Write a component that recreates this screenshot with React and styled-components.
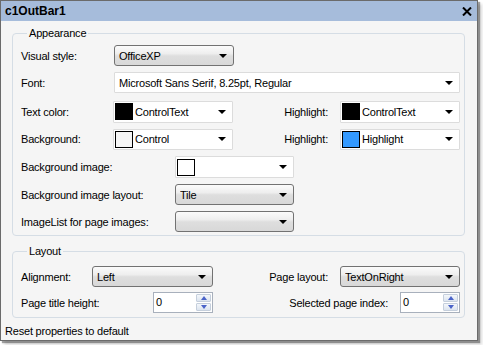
import React from "react";
import styled, { createGlobalStyle } from "styled-components";

const Global = createGlobalStyle`
  html, body { margin: 0; padding: 0; background: #ffffff; }
  body { font-family: "Liberation Sans", Arial, sans-serif; font-size: 11px; color: #000; letter-spacing: -0.2px; }
  #root { width: 483px; height: 345px; }
`;

const Win = styled.div`
  width: 476px;
  height: 339px;
  border: 1px solid #6b6b6b;
  background: #f5f5f5;
  box-shadow: 2px 2px 1px rgba(0,0,0,0.35), 4px 4px 3px rgba(0,0,0,0.15);
  display: flex;
  flex-direction: column;
  box-sizing: content-box;
`;

const TitleBar = styled.div`
  height: 20px;
  background: #a6bcdb;
  display: flex;
  align-items: center;
  justify-content: space-between;
  padding: 0 5px 0 4px;
  flex: none;
`;

const Title = styled.span`
  font-weight: bold;
  font-size: 12px;
  font-family: "Liberation Sans", Arial, sans-serif;
  letter-spacing: 0;
`;

const CloseIcon = () => (
  <svg width="10" height="9" viewBox="0 0 10 9">
    <path d="M1 0.5 L9 8.5 M9 0.5 L1 8.5" stroke="#000" strokeWidth="2" />
  </svg>
);

const Body = styled.div`
  flex: 1;
  display: flex;
  flex-direction: column;
  padding: 6px 12px 0 11px;
`;

const Group = styled.fieldset`
  margin: ${p => p.$mt || 0}px 0 0 0;
  padding: ${p => p.$pad};
  border: 1px solid #d5dde5;
  border-radius: 4px;
  display: flex;
  flex-direction: column;
  gap: ${p => p.$gap}px;
  min-width: 0;
`;

const Legend = styled.legend`
  padding: 0 2px;
  margin-left: 6px;
  font-size: 11px;
  line-height: 13px;
`;

const Row = styled.div`
  display: flex;
  align-items: center;
  height: ${p => p.$h || 21}px;
  margin-bottom: ${p => p.$mb || 0}px;
`;

const Label = styled.span`
  width: ${p => p.$w}px;
  flex: none;
  text-align: ${p => (p.$right ? "right" : "left")};
  padding-right: ${p => (p.$right ? 12 : 0)}px;
  box-sizing: border-box;
  white-space: nowrap;
`;

const Combo = styled.div`
  width: ${p => p.$w}px;
  height: ${p => p.$h || 21}px;
  box-sizing: border-box;
  flex: none;
  display: flex;
  align-items: center;
  padding: 0 6px 0 ${p => (p.$swatch ? 1 : 4)}px;
  border: 1px solid ${p => (p.$flat ? "#dcdcdc" : "#727272")};
  border-radius: ${p => (p.$flat ? 1 : 3)}px;
  background: ${p =>
    p.$flat
      ? "#ffffff"
      : "linear-gradient(to bottom, #fbfbfb 0%, #eeeeee 40%, #dedede 52%, #d8d8d8 100%)"};
`;

const ComboText = styled.span`
  flex: 1;
  white-space: nowrap;
  overflow: hidden;
`;

const Swatch = styled.span`
  width: 18px;
  height: 17px;
  box-sizing: border-box;
  border: 1px solid #000;
  background: ${p => p.$c};
  margin-right: 2px;
  flex: none;
`;

const Arrow = styled.span`
  width: 0;
  height: 0;
  border-left: 4px solid transparent;
  border-right: 4px solid transparent;
  border-top: 4px solid #000;
  flex: none;
`;

const Spin = styled.div`
  width: ${p => p.$w}px;
  height: 21px;
  box-sizing: border-box;
  border: 1px solid #a8b0bc;
  background: #fff;
  display: flex;
  flex: none;
`;

const SpinText = styled.span`
  flex: 1;
  padding-left: 2px;
  line-height: 19px;
`;

const SpinBtns = styled.div`
  width: 15px;
  display: flex;
  flex-direction: column;
  gap: 1px;
  padding: 1px 1px 1px 0;
`;

const SpinBtn = styled.div`
  flex: 1;
  display: flex;
  align-items: center;
  justify-content: center;
  background: linear-gradient(to bottom, #f4f7fb, #dce4ef);
  border: 1px solid #c5cfdc;
  border-radius: 1px;
`;

const Tri = styled.span`
  width: 0;
  height: 0;
  border-left: 3.5px solid transparent;
  border-right: 3.5px solid transparent;
  ${p => (p.$up ? "border-bottom: 4px solid #4a63c8;" : "border-top: 4px solid #4a63c8;")}
`;

const Footer = styled.div`
  padding: 7px 0 0 0;
  margin-left: -7px;
  font-size: 11px;
  line-height: 13px;
`;

function Dropdown({ w, h, flat, text, color }) {
  return (
    <Combo $w={w} $h={h} $flat={flat} $swatch={!!color}>
      {color && <Swatch $c={color} />}
      <ComboText>{text}</ComboText>
      <Arrow />
    </Combo>
  );
}

function Spinner({ w, value }) {
  return (
    <Spin $w={w}>
      <SpinText>{value}</SpinText>
      <SpinBtns>
        <SpinBtn><Tri $up /></SpinBtn>
        <SpinBtn><Tri /></SpinBtn>
      </SpinBtns>
    </Spin>
  );
}

export default function App() {
  return (
    <>
      <Global />
      <Win>
        <TitleBar>
          <Title>c1OutBar1</Title>
          <CloseIcon />
        </TitleBar>
        <Body>
          <Group $pad="5px 5px 3px 8px" $gap={6}>
            <Legend>Appearance</Legend>
            <Row>
              <Label $w={93}>Visual style:</Label>
              <Dropdown w={120} text="OfficeXP" />
            </Row>
            <Row $mb={2}>
              <Label $w={93}>Font:</Label>
              <Dropdown w={346} flat text="Microsoft Sans Serif, 8.25pt, Regular" />
            </Row>
            <Row>
              <Label $w={92}>Text color:</Label>
              <Dropdown w={120} h={22} flat text="ControlText" color="#000000" />
              <Label $w={107} $right>Highlight:</Label>
              <Dropdown w={120} h={22} flat text="ControlText" color="#000000" />
            </Row>
            <Row $h={22}>
              <Label $w={92}>Background:</Label>
              <Dropdown w={120} flat text="Control" color="#f5f5f5" />
              <Label $w={107} $right>Highlight:</Label>
              <Dropdown w={120} flat text="Highlight" color="#3399ff" />
            </Row>
            <Row $h={22}>
              <Label $w={154}>Background image:</Label>
              <Dropdown w={119} h={22} flat text="" color="#ffffff" />
            </Row>
            <Row>
              <Label $w={154}>Background image layout:</Label>
              <Dropdown w={119} text="Tile" />
            </Row>
            <Row>
              <Label $w={154}>ImageList for page images:</Label>
              <Dropdown w={119} text="" />
            </Row>
          </Group>
          <Group $pad="8px 5px 4px 8px" $gap={5} $mt={9}>
            <Legend>Layout</Legend>
            <Row>
              <Label $w={71}>Alignment:</Label>
              <Dropdown w={121} text="Left" />
              <Label $w={127} $right>Page layout:</Label>
              <Dropdown w={120} text="TextOnRight" />
            </Row>
            <Row>
              <Label $w={132}>Page title height:</Label>
              <Spinner w={60} value="0" />
              <Label $w={187} $right>Selected page index:</Label>
              <Spinner w={60} value="0" />
            </Row>
          </Group>
          <Footer>Reset properties to default</Footer>
        </Body>
      </Win>
    </>
  );
}
